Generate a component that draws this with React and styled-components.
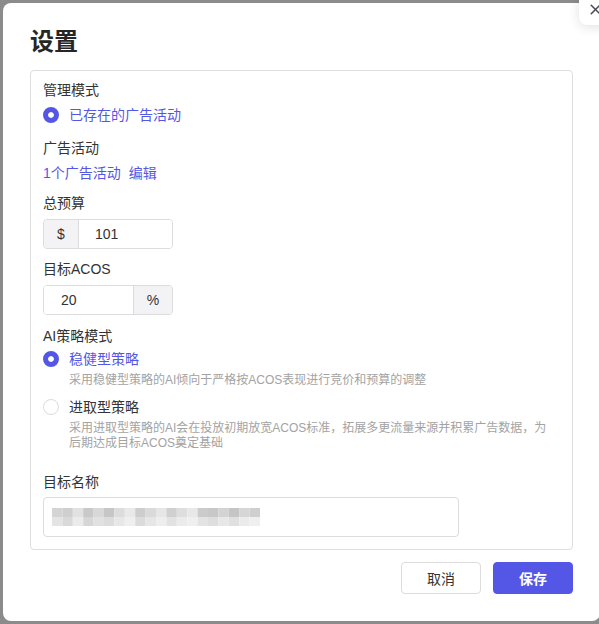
import React from "react";
import styled, { createGlobalStyle } from "styled-components";
import { X } from "lucide-react";

const PRIMARY = "#5457e6";

const GlobalStyle = createGlobalStyle`
  html, body {
    margin: 0;
    padding: 0;
  }
  body {
    background: #8b8b8b;
    font-family: "Liberation Sans", "Noto Sans CJK SC", sans-serif;
    color: #333;
  }
`;

// blurred name, drawn as a mosaic
const mosaic = [
  ["#d4d4d4", "#cfcfcf", "#e2e2e2", "#c9c9c9", "#d8d8d8", "#c6c6c6", "#dcdcdc", "#e9e9e9", "#cdcdcd", "#dadada", "#e6e6e6", "#d0d0d0", "#dedede", "#e8e8e8", "#cbcbcb", "#c8c8c8", "#d3d3d3", "#c5c5c5", "#d6d6d6", "#cfcfcf"],
  ["#e4e4e4", "#d9d9d9", "#ebebeb", "#d6d6d6", "#e1e1e1", "#dcdcdc", "#e7e7e7", "#efefef", "#dbdbdb", "#e6e6e6", "#eeeeee", "#e2e2e2", "#ebebeb", "#efefef", "#e3e3e3", "#dedede", "#e7e7e7", "#e0e0e0", "#ebebeb", "#efefef"],
];

const SettingsModal = () => {
  return (
    <Backdrop>
      <GlobalStyle />
      <Modal>
        <Title>设置</Title>
        <Panel>
          <Label>管理模式</Label>
          <RadioRow $gap={5}>
            <Radio $checked />
            <RadioText $active>已存在的广告活动</RadioText>
          </RadioRow>

          <Label $top={13}>广告活动</Label>
          <Links>
            <Link>1个广告活动</Link>
            <Link>编辑</Link>
          </Links>

          <Label $top={10}>总预算</Label>
          <InputGroup>
            <Addon $side="left">$</Addon>
            <Field $pad={16} readOnly value="101" />
          </InputGroup>

          <Label $top={10}>目标ACOS</Label>
          <InputGroup>
            <Field $pad={17} readOnly value="20" />
            <Addon $side="right">%</Addon>
          </InputGroup>

          <Label $top={11}>AI策略模式</Label>
          <RadioRow $gap={3}>
            <Radio $checked />
            <RadioText $active>稳健型策略</RadioText>
          </RadioRow>
          <Desc>采用稳健型策略的AI倾向于严格按ACOS表现进行竞价和预算的调整</Desc>
          <RadioRow $gap={9}>
            <Radio />
            <RadioText>进取型策略</RadioText>
          </RadioRow>
          <Desc>
            采用进取型策略的AI会在投放初期放宽ACOS标准，拓展多更流量来源并积累广告数据，为
            <br />
            后期达成目标ACOS奠定基础
          </Desc>

          <Label $top={21}>目标名称</Label>
          <NameBox>
            <svg width="208" height="18" viewBox="0 0 208 18">
              {mosaic.map((row, r) =>
                row.map((c, i) => (
                  <rect key={`${r}-${i}`} x={i * 10.4} y={r * 9} width="10.4" height="9" fill={c} />
                ))
              )}
            </svg>
          </NameBox>
        </Panel>

        <Footer>
          <Button>取消</Button>
          <Button $primary>保存</Button>
        </Footer>
      </Modal>
      <CloseButton>
        <X size={17} strokeWidth={2.2} color="#4a4a55" />
      </CloseButton>
    </Backdrop>
  );
};

export default function App() {
  return <SettingsModal />;
}

const Backdrop = styled.div`
  position: relative;
  height: 624px;
  padding: 3px 0 0 3px;
  box-sizing: border-box;
  overflow: hidden;
`;

const Modal = styled.div`
  width: 597px;
  height: 618px;
  box-sizing: border-box;
  background: #fff;
  border-radius: 8px;
  padding: 23px 27px 0;
`;

const Title = styled.h1`
  margin: 0;
  font-size: 24px;
  line-height: 32px;
  font-weight: 600;
  color: #262626;
`;

const Panel = styled.div`
  margin-top: 12px;
  border: 1px solid #dedede;
  border-radius: 4px;
  padding: 9px 12px 12px;
`;

const Label = styled.div`
  margin-top: ${(p) => p.$top || 0}px;
  font-size: 14px;
  line-height: 20px;
  color: #333;
`;

const RadioRow = styled.div`
  display: flex;
  align-items: center;
  gap: 10px;
  height: 20px;
  margin-top: ${(p) => p.$gap}px;
`;

const Radio = styled.span`
  box-sizing: border-box;
  width: 16px;
  height: 16px;
  border-radius: 50%;
  flex: none;
  background: ${(p) => (p.$checked ? PRIMARY : "#fff")};
  border: ${(p) => (p.$checked ? `5px solid ${PRIMARY}` : "1px solid #dcdcdc")};
  box-shadow: ${(p) => (p.$checked ? "inset 0 0 0 6px #fff" : "none")};
`;

const RadioText = styled.span`
  font-size: 14px;
  line-height: 20px;
  color: ${(p) => (p.$active ? PRIMARY : "#333")};
`;

const Links = styled.div`
  display: flex;
  gap: 8px;
  margin-top: 5px;
`;

const Link = styled.a`
  font-size: 14px;
  line-height: 20px;
  color: ${PRIMARY};
  cursor: pointer;
`;

const InputGroup = styled.div`
  display: flex;
  width: 130px;
  height: 30px;
  margin-top: 6px;
  box-sizing: border-box;
  border: 1px solid #dcdcdc;
  border-radius: 4px;
  overflow: hidden;
`;

const Addon = styled.div`
  display: flex;
  align-items: center;
  justify-content: center;
  flex: none;
  width: ${(p) => (p.$side === "left" ? 34 : 38)}px;
  background: #f3f3f6;
  font-size: 14px;
  color: #333;
  ${(p) => (p.$side === "left" ? "border-right" : "border-left")}: 1px solid #dcdcdc;
`;

const Field = styled.input`
  flex: 1;
  min-width: 0;
  border: none;
  outline: none;
  padding: 0 0 0 ${(p) => p.$pad}px;
  font-family: inherit;
  font-size: 14px;
  color: #333;
  background: #fff;
`;

const Desc = styled.div`
  margin: 4px 0 0 26px;
  font-size: 12px;
  line-height: 15px;
  color: #a3a3a3;
`;

const NameBox = styled.div`
  display: flex;
  align-items: center;
  width: 416px;
  height: 40px;
  margin-top: 5px;
  box-sizing: border-box;
  padding-left: 8px;
  border: 1px solid #dcdcdc;
  border-radius: 4px;
`;

const Footer = styled.div`
  display: flex;
  justify-content: flex-end;
  gap: 12px;
  margin-top: 12px;
`;

const Button = styled.button`
  width: 80px;
  height: 32px;
  border-radius: 4px;
  font-family: inherit;
  font-size: 14px;
  font-weight: ${(p) => (p.$primary ? 600 : 400)};
  cursor: pointer;
  color: ${(p) => (p.$primary ? "#fff" : "#333")};
  background: ${(p) => (p.$primary ? PRIMARY : "#fff")};
  border: 1px solid ${(p) => (p.$primary ? PRIMARY : "#dcdcdc")};
`;

const CloseButton = styled.div`
  position: absolute;
  top: -7px;
  left: 579px;
  width: 32px;
  height: 32px;
  display: flex;
  align-items: center;
  justify-content: center;
  background: #fff;
  border-radius: 8px;
  box-shadow: 0 2px 12px rgba(0, 0, 0, 0.12);
`;
